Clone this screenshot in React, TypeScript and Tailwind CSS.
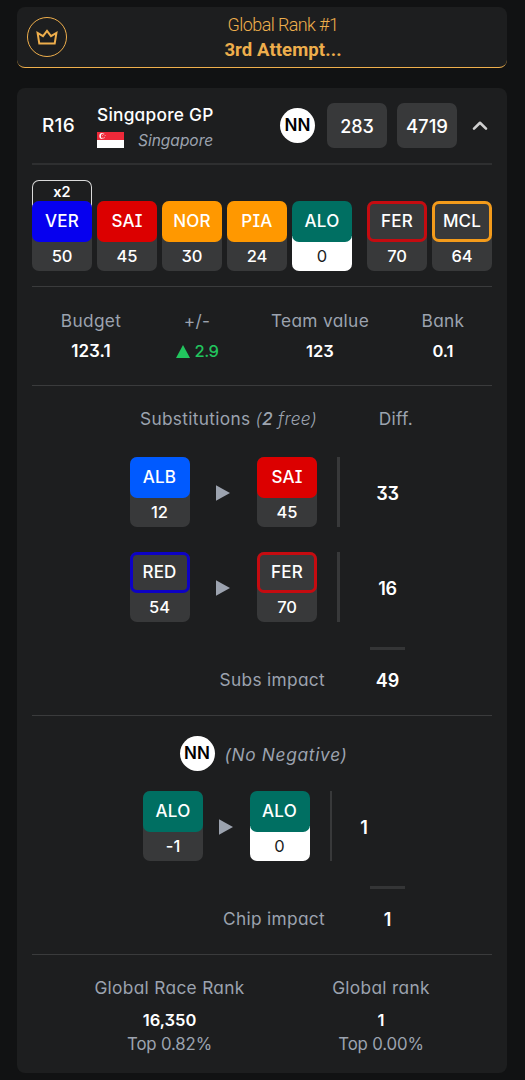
import type { ReactNode } from "react";

type Tile = { code: string; points: string; fill?: string; ring?: string; chip?: boolean; boost?: boolean };

const drivers: Tile[] = [
  { code: "VER", points: "50", fill: "bg-[#0600ef]", boost: true },
  { code: "SAI", points: "45", fill: "bg-[#dc0000]" },
  { code: "NOR", points: "30", fill: "bg-[#ff9800]" },
  { code: "PIA", points: "24", fill: "bg-[#ff9800]" },
  { code: "ALO", points: "0", fill: "bg-[#006f62]", chip: true },
];

const teams: Tile[] = [
  { code: "FER", points: "70", ring: "border-[#c50b10]" },
  { code: "MCL", points: "64", ring: "border-[#f39b1b]" },
];

function ScoreTile({ code, points, fill, ring, chip, boost }: Tile) {
  return (
    <div className="relative w-[60px] shrink-0">
      {boost && (
        <div className="absolute -top-[21px] left-0 h-[30px] w-full rounded-t-[7px] border border-b-0 border-[#dadada] text-center text-[14.5px] leading-[22px] font-semibold">
          x2
        </div>
      )}
      <div
        className={`relative h-[70px] rounded-[7px] ${chip ? "bg-linear-to-b from-transparent from-50% to-white to-50% text-[#1c1d1e]" : "bg-[#38393a] text-white"}`}
      >
        <div
          className={`flex h-[41px] items-center justify-center rounded-[7px] text-[17px] font-medium tracking-[0.2px] text-white ${fill ?? "bg-[#38393a]"} ${ring ? `border-3 ${ring}` : ""}`}
        >
          {code}
        </div>
        <div className={`text-center text-[16.5px] leading-[29px] tracking-[-0.1px] ${chip ? "font-normal" : "font-medium"}`}>{points}</div>
      </div>
    </div>
  );
}

function ChipBadge() {
  return (
    <div className="flex size-[35px] shrink-0 items-center justify-center rounded-full bg-white text-[17px] font-semibold tracking-[0.2px] text-black">
      NN
    </div>
  );
}

function Arrow() {
  return (
    <svg className="mt-[2px] shrink-0" width="14" height="16" viewBox="0 0 14 16">
      <path d="M0 .3 14 8 0 15.7Z" fill="#9ca3af" />
    </svg>
  );
}

function Divider({ className = "" }: { className?: string }) {
  return <div className={`h-px bg-[#3a3b3c] ${className}`} />;
}

function Label({ children }: { children: ReactNode }) {
  return <div className="text-[17.3px] leading-[24px] tracking-[0.32px] whitespace-nowrap text-[#9ca3af]">{children}</div>;
}

function Substitution({ from, to, diff }: { from: Tile; to: Tile; diff: string }) {
  return (
    <div className="flex h-[70px] items-center pl-[97.5px]">
      <ScoreTile {...from} />
      <div className="flex w-[67.5px] justify-center">
        <Arrow />
      </div>
      <ScoreTile {...to} />
      <div className="ml-5 h-full w-[3px] bg-[#38393a]" />
      <div className="w-[95px] pt-[2px] text-center text-[18px] font-semibold tracking-[-0.3px]">{diff}</div>
    </div>
  );
}

function Impact({ label, value }: { label: string; value: string }) {
  return (
    <div className="flex h-6 items-center">
      <div className="flex w-[293px] justify-end">
        <Label>{label}</Label>
      </div>
      <div className="ml-[45px] w-[35px] text-center text-[18px] font-semibold">{value}</div>
    </div>
  );
}

export default function App() {
  return (
    <div className="h-[1080px] w-[525px] overflow-hidden bg-[#111213] pt-[7px] pr-[18px] pl-[17px] font-['Inter','Liberation_Sans',sans-serif] text-white [font-feature-settings:'cv08','cv09','cv11']">
      <header className="flex h-[61px] rounded-lg border-b border-[#f0b04c] bg-[#1d1e1f] text-[#eeae4c]">
        <div className="mt-[10px] ml-[10px] flex size-10 shrink-0 items-center justify-center rounded-full border border-[#eeae4c]">
          <svg width="22" height="17" viewBox="0 0 22 17" fill="none" stroke="currentColor" strokeWidth="2">
            <path d="M3.3 14.6 1.6 3.9 7 7.2 11 2l4 5.2 5.4-3.3-1.7 10.7Z" />
          </svg>
        </div>
        <div className="ml-[34px] flex w-[364px] flex-col items-center pt-[6px] font-['Roboto','Liberation_Sans',sans-serif]">
          <div className="text-[18px] leading-6 font-light tracking-[-0.6px]">Global Rank #1</div>
          <div className="text-[18.5px] leading-[26px] font-bold tracking-[0.1px]">3rd Attempt...</div>
        </div>
      </header>

      <main className="mt-5 h-[985px] rounded-lg bg-[#1d1e1f] px-[15px] pt-[15px]">
        <div className="flex h-[45px] items-center">
          <div className="w-[65px] pt-[2px] pl-[10px] text-[19px] font-medium tracking-[0.3px]">R16</div>
          <div className="flex w-[183px] flex-col">
            <div className="pt-[3px] text-[17.3px] leading-6 font-medium tracking-[0.25px]">Singapore GP</div>
            <div className="flex h-[25px] items-center gap-[14px]">
              <svg className="mt-[2px]" width="27" height="16" viewBox="0 0 27 16">
                <path d="M0 0h27v16H0Z" fill="#fff" />
                <path d="M0 0h27v8H0Z" fill="#ed2939" />
                <circle cx="5.2" cy="4" r="2.9" fill="#fff" />
                <circle cx="6.5" cy="4" r="2.6" fill="#ed2939" />
                <g fill="#fff">
                  <circle cx="6.8" cy="2.2" r=".45" />
                  <circle cx="5.5" cy="3.5" r=".45" />
                  <circle cx="8.1" cy="3.5" r=".45" />
                  <circle cx="6" cy="5.2" r=".45" />
                  <circle cx="7.6" cy="5.2" r=".45" />
                </g>
              </svg>
              <div className="pt-[3px] text-[15.5px] text-[#9ca3af] italic">Singapore</div>
            </div>
          </div>
          <ChipBadge />
          <div className="ml-[12px] flex h-[45px] w-[60px] items-center justify-center rounded-[7px] bg-[#38393a] pt-[2px] text-[18px] font-medium">
            283
          </div>
          <div className="ml-[10px] flex h-[45px] w-[60px] items-center justify-center rounded-[7px] bg-[#38393a] pt-[2px] text-[18.5px] font-medium">
            4719
          </div>
          <svg className="ml-[14px]" width="18" height="12" viewBox="0 0 18 12" fill="none" stroke="#d0d0d0" strokeWidth="2.6" strokeLinecap="round" strokeLinejoin="round">
            <path d="m3 8.6 6-5.8 6 5.8" />
          </svg>
        </div>
        <div className="mt-[15px] h-[2px] bg-[#2e2f30]" />

        <div className="mt-9 flex gap-[5px]">
          {drivers.map((d) => (
            <ScoreTile key={d.code} {...d} />
          ))}
          <div className="ml-[10px] flex gap-[5px]">
            {teams.map((t) => (
              <ScoreTile key={t.code} {...t} />
            ))}
          </div>
        </div>
        <Divider className="mt-[15px]" />

        <div className="mt-[22px] grid grid-cols-[118px_94px_152px_94px] text-center">
          <Label>Budget</Label>
          <Label>+/-</Label>
          <Label>Team value</Label>
          <Label>Bank</Label>
          <div className="mt-[6px] text-[17px] leading-6 font-semibold">123.1</div>
          <div className="mt-[6px] flex items-center justify-center gap-[5px] text-[16.5px] leading-6 font-medium tracking-[-0.5px] text-[#22c55e]">
            <svg width="14" height="13" viewBox="0 0 14 13">
              <path d="M7 0 14 13H0Z" fill="currentColor" />
            </svg>
            2.9
          </div>
          <div className="mt-[6px] text-[16.5px] leading-6 font-semibold">123</div>
          <div className="mt-[6px] text-[16.5px] leading-6 font-semibold">0.1</div>
        </div>
        <Divider className="mt-[22px]" />

        <div className="mt-[21px] flex justify-between pr-[79px] pl-[108px]">
          <Label>
            Substitutions{" "}
            <span className="font-light italic">
              (<span className="font-medium">2</span> free)
            </span>
          </Label>
          <Label>Diff.</Label>
        </div>
        <div className="mt-[26px] flex flex-col gap-[25px]">
          <Substitution
            from={{ code: "ALB", points: "12", fill: "bg-[#005aff]" }}
            to={{ code: "SAI", points: "45", fill: "bg-[#dc0000]" }}
            diff="33"
          />
          <Substitution
            from={{ code: "RED", points: "54", ring: "border-[#0d02c4]" }}
            to={{ code: "FER", points: "70", ring: "border-[#c50b10]" }}
            diff="16"
          />
        </div>
        <div className="mt-[25px] ml-[338px] h-[3px] w-[35px] bg-[#343536]" />
        <div className="mt-[18px]">
          <Impact label="Subs impact" value="49" />
        </div>
        <Divider className="mt-[23px]" />

        <div className="mt-[20px] flex items-center gap-[10px] pl-[147.5px]">
          <ChipBadge />
          <div className="pt-[2px] text-[17.3px] tracking-[0.7px] text-[#9ca3af] italic">(No Negative)</div>
        </div>
        <div className="mt-5 flex h-[70px] items-center pl-[111px]">
          <ScoreTile code="ALO" points="-1" fill="bg-[#006f62]" />
          <div className="flex w-[46.5px] justify-center">
            <Arrow />
          </div>
          <ScoreTile code="ALO" points="0" fill="bg-[#006f62]" chip />
          <div className="ml-5 h-full w-[2px] bg-[#38393a]" />
          <div className="w-[65px] pt-[2px] text-center text-[18px] font-semibold">1</div>
        </div>
        <div className="mt-[25px] ml-[338px] h-[3px] w-[35px] bg-[#343536]" />
        <div className="mt-[18px]">
          <Impact label="Chip impact" value="1" />
        </div>
        <Divider className="mt-[23px]" />

        <div className="mt-[21px] grid grid-cols-[275px_148px] text-center">
          <Label>Global Race Rank</Label>
          <Label>Global rank</Label>
          <div className="mt-2 text-[16.5px] leading-6 font-semibold">16,350</div>
          <div className="mt-2 text-[16.5px] leading-6 font-semibold">1</div>
          <div className="text-[16.8px] leading-6 tracking-[-0.15px] text-[#9ca3af]">Top 0.82%</div>
          <div className="text-[16.8px] leading-6 tracking-[-0.15px] text-[#9ca3af]">Top 0.00%</div>
        </div>
      </main>
    </div>
  );
}
